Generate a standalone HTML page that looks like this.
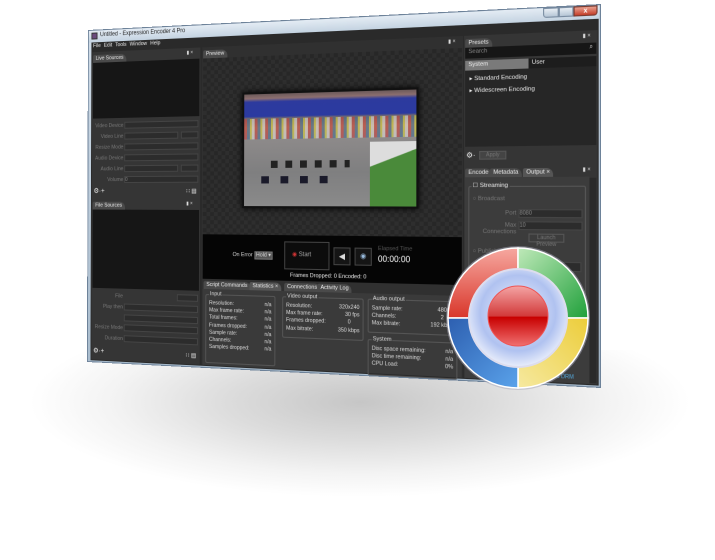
<!DOCTYPE html>
<html><head><meta charset="utf-8"><style>
*{margin:0;padding:0;box-sizing:border-box}
body{width:715px;height:556px;overflow:hidden;background:#fff;position:relative;font-family:"Liberation Sans",sans-serif}
#shadow{position:absolute;left:30px;top:350px;width:660px;height:210px;background:radial-gradient(ellipse 50% 45% at 50% 25%,#c6c6c6 0%,#dcdcdc 40%,#f3f3f3 75%,#fff 100%)}
#win{position:absolute;left:0;top:0;width:514px;height:340px;transform-origin:0 0;
transform:matrix3d(0.83986,-0.051636,0,-0.00026321,-0.003439,0.9744,0,-0.0000057,0,0,1,0,88,30,0,1);
background:linear-gradient(#cfdbe7,#a9bccd);font-size:6px;color:#ddd;overflow:hidden;border:1px solid #6d8299}
.a{position:absolute}
.dk{background:#353535}
.bl{background:#161616}
.tab{position:absolute;height:8px;background:#4a4a4a;color:#eee;font-size:5.5px;line-height:8px;padding:0 3px;border-radius:2px 6px 0 0}
.lbl{position:absolute;color:#777;font-size:5.5px;text-align:right}
.fld{position:absolute;background:#2c2c2c;border:1px solid #444;height:7px}
.grp{position:absolute;border:1px solid #555;border-radius:2px}
.gt{position:absolute;top:-4px;left:3px;background:#3a3a3a;color:#ddd;font-size:5.5px;padding:0 1px}
.row{display:flex;justify-content:space-between;font-size:5.3px;line-height:7.2px;color:#ddd}
</style></head><body>
<div id="shadow"></div>
<div id="win">
 <div class="a" style="left:0;top:0;width:514px;height:12px;background:linear-gradient(#e4ecf4,#c4d3e1)"></div>
 <div class="a" style="left:3px;top:2px;width:7px;height:7px;background:#6b4b7d;border:1px solid #333"></div>
 <div class="a" style="left:13px;top:2px;color:#222;font-size:6px">Untitled - Expression Encoder 4 Pro</div>
 <div class="a" style="left:462px;top:0;width:14px;height:9px;background:linear-gradient(#e8eef4,#b6c6d6);border:1px solid #7a8da2;border-radius:0 0 0 3px"></div>
 <div class="a" style="left:476px;top:0;width:13px;height:9px;background:linear-gradient(#e8eef4,#b6c6d6);border:1px solid #7a8da2"></div>
 <div class="a" style="left:489px;top:0;width:21px;height:9px;background:linear-gradient(#e9a08f,#c5402b);border:1px solid #7a3b30;border-radius:0 0 3px 0;color:#fff;font-size:6px;text-align:center;line-height:8px;font-weight:bold">x</div>
 <div class="a" style="left:3px;top:12px;width:508px;height:325px;background:#2a2a2a"></div>
 <div class="a" style="left:5px;top:13px;font-size:5.5px;color:#eee;word-spacing:2px">File Edit Tools Window Help</div>
 <div class="a dk" style="left:4px;top:22px;width:121px;height:314px"></div>
 <div class="tab" style="left:5px;top:25px">Live Sources</div>
 <div class="a" style="left:110px;top:24px;font-size:5px">▮ ×</div>
 <div class="a bl" style="left:5px;top:33px;width:119px;height:57px"></div>
 <div class="lbl" style="left:4px;top:95px;width:36px">Video Device</div><div class="fld" style="left:41px;top:94px;width:82px"></div>
 <div class="lbl" style="left:4px;top:106px;width:36px">Video Line</div><div class="fld" style="left:41px;top:105px;width:60px"></div><div class="fld" style="left:104px;top:105px;width:19px"></div>
 <div class="lbl" style="left:4px;top:117px;width:36px">Resize Mode</div><div class="fld" style="left:41px;top:116px;width:82px"></div>
 <div class="lbl" style="left:4px;top:128px;width:36px">Audio Device</div><div class="fld" style="left:41px;top:127px;width:82px"></div>
 <div class="lbl" style="left:4px;top:139px;width:36px">Audio Line</div><div class="fld" style="left:41px;top:138px;width:60px"></div><div class="fld" style="left:104px;top:138px;width:19px"></div>
 <div class="lbl" style="left:4px;top:150px;width:36px">Volume</div><div class="fld" style="left:41px;top:149px;width:82px;color:#888;font-size:5px">0</div>
 <div class="a" style="left:6px;top:160px;font-size:7px;color:#eee">⚙·+</div>
 <div class="a" style="left:110px;top:161px;font-size:6px;color:#eee">∷ ▤</div>
 <div class="tab" style="left:5px;top:175px">File Sources</div>
 <div class="a" style="left:110px;top:174px;font-size:5px">▮ ×</div>
 <div class="a bl" style="left:5px;top:183px;width:119px;height:80px"></div>
 <div class="lbl" style="left:4px;top:268px;width:36px">File</div><div class="fld" style="left:100px;top:267px;width:23px"></div>
 <div class="lbl" style="left:4px;top:279px;width:36px">Play then</div><div class="fld" style="left:41px;top:278px;width:82px"></div>
 <div class="fld" style="left:41px;top:289px;width:82px"></div>
 <div class="lbl" style="left:4px;top:300px;width:36px">Resize Mode</div><div class="fld" style="left:41px;top:299px;width:82px"></div>
 <div class="lbl" style="left:4px;top:311px;width:36px">Duration</div><div class="fld" style="left:41px;top:310px;width:82px"></div>
 <div class="a" style="left:6px;top:323px;font-size:7px;color:#eee">⚙·+</div>
 <div class="a" style="left:110px;top:324px;font-size:6px;color:#eee">∷ ▤</div>
 <div class="a" style="left:127px;top:22px;width:262px;height:314px;background:#303030"></div>
 <div class="tab" style="left:128px;top:25px">Preview</div>
 <div class="a" style="left:375px;top:24px;font-size:5px">▮ ×</div>
 <div class="a" style="left:128px;top:33px;width:260px;height:174px;background:#2a2a2a;background-image:repeating-conic-gradient(#2e2e2e 0 25%,#272727 0 50%);background-size:8px 8px"></div>
 <div class="a" style="left:170px;top:68px;width:177px;height:113px;background:#111;box-shadow:0 0 6px #000"></div>
 <div class="a" style="left:172px;top:70px;width:173px;height:109px;background:linear-gradient(#6c5a5a 0%,#8c6f6f 4%,#2d3a9e 7%,#2b3aa0 20%,#7a6f6a 22%,#a58a70 30%,#8d8a8a 40%,#7f7f80 70%,#8a8a8a 100%)"></div>
 <div class="a" style="left:172px;top:94px;width:173px;height:20px;background:repeating-linear-gradient(90deg,#c33 0 3px,#369 3px 6px,#dd3 6px 8px,#eee 8px 11px);opacity:.5"></div>
 <div class="a" style="left:300px;top:118px;width:45px;height:61px;background:linear-gradient(160deg,#ddd 0 30%,#4a8a3a 31%,#4a8a3a 100%)"></div>
 <div class="a" style="left:200px;top:135px;width:80px;height:7px;background:repeating-linear-gradient(90deg,#222 0 7px,transparent 7px 15px)"></div>
 <div class="a" style="left:190px;top:150px;width:70px;height:7px;background:repeating-linear-gradient(90deg,#1a1a2a 0 8px,transparent 8px 20px)"></div>
 <div class="a" style="left:128px;top:207px;width:260px;height:44px;background:#050505"></div>
 <div class="a" style="left:160px;top:224px;font-size:5.5px;color:#ddd">On Error <span style="background:#555;padding:0 1px;border:1px solid #777">Hold ▾</span></div>
 <div class="a" style="left:214px;top:213px;width:46px;height:27px;border:1px solid #444;background:#0c0c0c;color:#aaa;font-size:6px;line-height:25px;padding-left:7px"><span style="color:#c33">◉</span> Start</div>
 <div class="a" style="left:264px;top:218px;width:17px;height:17px;border:1px solid #444;background:#151515;color:#ddd;font-size:8px;text-align:center;line-height:15px">◀</div>
 <div class="a" style="left:285px;top:218px;width:17px;height:17px;border:1px solid #444;background:#151515;color:#9bd;font-size:7px;text-align:center;line-height:15px">◉</div>
 <div class="a" style="left:308px;top:216px;font-size:5.5px;color:#555">Elapsed Time</div>
 <div class="a" style="left:308px;top:224px;font-size:8px;color:#fff">00:00:00</div>
 <div class="a" style="left:220px;top:243px;font-size:5.5px;color:#eee">Frames Dropped: 0 Encoded: 0</div>
 <div class="tab" style="left:129px;top:253px">Script Commands</div>
 <div class="tab" style="left:178px;top:253px;background:#555">Statistics ×</div>
 <div class="tab" style="left:214px;top:253px">Connections</div>
 <div class="tab" style="left:248px;top:253px">Activity Log</div>
 <div class="a" style="left:128px;top:261px;width:260px;height:75px;background:#3a3a3a"></div>
 <div class="grp" style="left:131px;top:266px;width:74px;height:68px"><div class="gt">Input</div>
  <div style="padding:5px 3px 0 3px">
  <div class="row"><span>Resolution:</span><span>n/a</span></div><div class="row"><span>Max frame rate:</span><span>n/a</span></div><div class="row"><span>Total frames:</span><span>n/a</span></div><div class="row"><span>Frames dropped:</span><span>n/a</span></div><div class="row"><span>Sample rate:</span><span>n/a</span></div><div class="row"><span>Channels:</span><span>n/a</span></div><div class="row"><span>Samples dropped:</span><span>n/a</span></div></div></div>
 <div class="grp" style="left:212px;top:266px;width:82px;height:40px"><div class="gt">Video output</div>
  <div style="padding:5px 3px 0 3px"><div class="row"><span>Resolution:</span><span>320x240</span></div><div class="row"><span>Max frame rate:</span><span>30 fps</span></div><div class="row"><span>Frames dropped:</span><span>0&nbsp;&nbsp;&nbsp;&nbsp;&nbsp;&nbsp;</span></div><div class="row"><span>Max bitrate:</span><span>350 kbps</span></div></div></div>
 <div class="grp" style="left:298px;top:266px;width:86px;height:32px"><div class="gt">Audio output</div>
  <div style="padding:5px 3px 0 3px"><div class="row"><span>Sample rate:</span><span>48000</span></div><div class="row"><span>Channels:</span><span>2&nbsp;&nbsp;&nbsp;&nbsp;&nbsp;&nbsp;</span></div><div class="row"><span>Max bitrate:</span><span>192 kbps</span></div></div></div>
 <div class="grp" style="left:298px;top:304px;width:86px;height:34px"><div class="gt">System</div>
  <div style="padding:5px 3px 0 3px"><div class="row"><span>Disc space remaining:</span><span>n/a</span></div><div class="row"><span>Disc time remaining:</span><span>n/a</span></div><div class="row"><span>CPU Load:</span><span>0%</span></div></div></div>
 <div class="a dk" style="left:390px;top:22px;width:120px;height:314px"></div>
 <div class="tab" style="left:391px;top:25px">Presets</div>
 <div class="a" style="left:497px;top:24px;font-size:5px">▮ ×</div>
 <div class="a bl" style="left:391px;top:33px;width:118px;height:10px;color:#888;font-size:5.5px;padding:1px 3px">Search<span style="float:right;color:#ccc">⌕</span></div>
 <div class="a" style="left:391px;top:45px;width:58px;height:9px;background:#7a7a7a;color:#eee;font-size:5.5px;padding:1px 3px">System</div>
 <div class="a" style="left:449px;top:45px;width:60px;height:9px;background:#1d1d1d;color:#eee;font-size:5.5px;padding:1px 3px">User</div>
 <div class="a" style="left:391px;top:54px;width:118px;height:70px;background:#262626;color:#eee;font-size:5.7px;padding:3px 4px;line-height:11px">▸ Standard Encoding<br>▸ Widescreen Encoding</div>
 <div class="a" style="left:392px;top:128px;font-size:7px;color:#eee">⚙·</div>
 <div class="a" style="left:404px;top:128px;width:25px;height:8px;background:#444;border:1px solid #555;color:#777;font-size:5px;text-align:center">Apply</div>
 <div class="tab" style="left:391px;top:144px">Encode</div>
 <div class="tab" style="left:414px;top:144px">Metadata</div>
 <div class="tab" style="left:444px;top:144px;background:#555">Output ×</div>
 <div class="a" style="left:497px;top:143px;font-size:5px">▮ ×</div>
 <div class="a" style="left:391px;top:152px;width:112px;height:184px;background:#3c3c3c"></div>
 <div class="a" style="left:503px;top:153px;width:6px;height:182px;background:#2a2a2a"></div>
 <div class="grp" style="left:394px;top:160px;width:106px;height:100px"></div>
 <div class="a" style="left:397px;top:157px;font-size:5.7px;color:#eee;background:#3c3c3c;padding:0 1px">☐ Streaming</div>
 <div class="a" style="left:398px;top:169px;font-size:5.5px;color:#777">○ Broadcast</div>
 <div class="lbl" style="left:400px;top:182px;width:38px">Port</div><div class="fld" style="left:440px;top:181px;width:57px;height:8px;color:#888;font-size:5px">8080</div>
 <div class="lbl" style="left:396px;top:193px;width:42px">Max Connections</div><div class="fld" style="left:440px;top:192px;width:57px;height:8px;color:#888;font-size:5px">10</div>
 <div class="a" style="left:449px;top:203px;width:32px;height:8px;border:1px solid #555;color:#777;font-size:5px;text-align:center">Launch Preview</div>
 <div class="a" style="left:398px;top:217px;font-size:5.5px;color:#777">○ Publishing Point</div>
 <div class="fld" style="left:400px;top:228px;width:96px;height:9px"></div>
 <div class="a" style="left:455px;top:328px;font-size:5px;color:#5ad">Silverlight DRM</div>
</div>
<svg class="a" style="position:absolute;left:444px;top:244px" width="148" height="148" viewBox="0 0 148 148">
<defs>
<linearGradient id="r" x1="0" y1="0" x2="0" y2="1"><stop offset="0" stop-color="#f6a8a0"/><stop offset="1" stop-color="#d9362a"/></linearGradient>
<linearGradient id="g" x1="0" y1="0" x2="1" y2="1"><stop offset="0" stop-color="#bfe9b9"/><stop offset="1" stop-color="#1fa03a"/></linearGradient>
<linearGradient id="y" x1="1" y1="0" x2="0" y2="1"><stop offset="0" stop-color="#eccd3a"/><stop offset="1" stop-color="#f6e9a0"/></linearGradient>
<linearGradient id="b" x1="0" y1="0" x2="1" y2="1"><stop offset="0" stop-color="#2d5fb0"/><stop offset="1" stop-color="#5aa2ea"/></linearGradient>
<radialGradient id="in" cx=".5" cy=".45" r=".55"><stop offset="0" stop-color="#f4f7ff"/><stop offset=".7" stop-color="#b0c2f0"/><stop offset="1" stop-color="#e9eefb"/></radialGradient>
<linearGradient id="rs" x1="0" y1="0" x2="0" y2="1"><stop offset="0" stop-color="#f4a4a4"/><stop offset=".5" stop-color="#d23a3a"/><stop offset=".52" stop-color="#c80000"/><stop offset="1" stop-color="#f07070"/></linearGradient>
</defs>
<circle cx="74" cy="74" r="72" fill="#aab" opacity=".5"/>
<path d="M74 4 A70 70 0 0 0 4 74 L26 74 A48 48 0 0 1 74 26Z" fill="url(#r)" stroke="#fff" stroke-width="1.5"/>
<path d="M74 4 A70 70 0 0 1 144 74 L122 74 A48 48 0 0 0 74 26Z" fill="url(#g)" stroke="#fff" stroke-width="1.5"/>
<path d="M144 74 A70 70 0 0 1 74 144 L74 122 A48 48 0 0 0 122 74Z" fill="url(#y)" stroke="#fff" stroke-width="1.5"/>
<path d="M74 144 A70 70 0 0 1 4 74 L26 74 A48 48 0 0 0 74 122Z" fill="url(#b)" stroke="#fff" stroke-width="1.5"/>
<circle cx="74" cy="74" r="49" fill="url(#in)" stroke="#dde" stroke-width="2"/>
<circle cx="74" cy="72" r="30" fill="url(#rs)" stroke="#e55" stroke-width="1"/>
</svg>
</body></html>
